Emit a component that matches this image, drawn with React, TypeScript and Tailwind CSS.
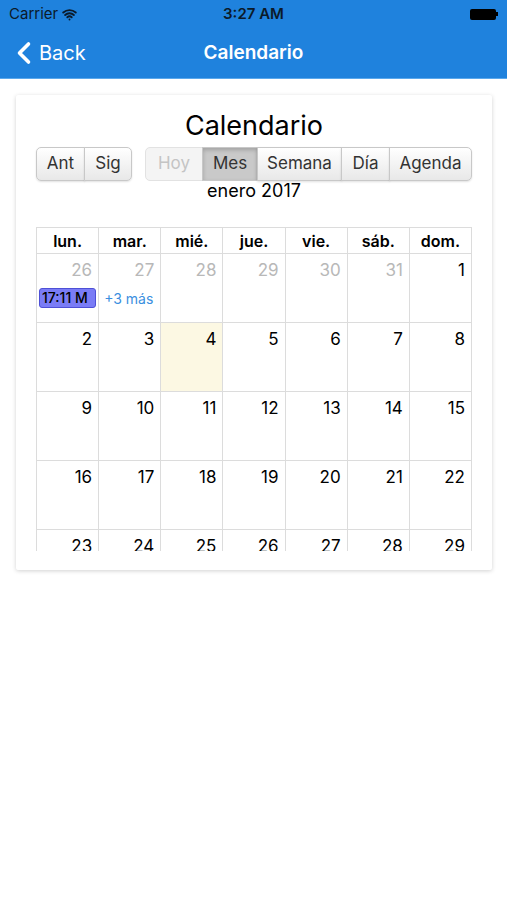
import React from 'react';
import { ChevronLeft, Wifi } from 'lucide-react';

const font = { fontFamily: 'Inter, "Liberation Sans", sans-serif' };

const weekdays = ['lun.', 'mar.', 'mié.', 'jue.', 'vie.', 'sáb.', 'dom.'];

// enero 2017, weeks starting on Monday
const weeks: { d: number; off?: boolean }[][] = [
  [26, 27, 28, 29, 30, 31].map((d) => ({ d, off: true })).concat([{ d: 1 }]),
  [2, 3, 4, 5, 6, 7, 8].map((d) => ({ d })),
  [9, 10, 11, 12, 13, 14, 15].map((d) => ({ d })),
  [16, 17, 18, 19, 20, 21, 22].map((d) => ({ d })),
  [23, 24, 25, 26, 27, 28, 29].map((d) => ({ d })),
  [30, 31, 1, 2, 3, 4, 5].map((d, i) => ({ d, off: i > 1 })),
];

function Btn({ children, active, disabled, first, last, className = '' }: any) {
  return (
    <button
      className={`h-[34px] border border-[#c8c8c8] text-[17px] -ml-px first:ml-0 ${first ? 'rounded-l-[5px]' : ''} ${last ? 'rounded-r-[5px]' : ''} ${
        active
          ? 'bg-[#c9c9c9] text-[#333] shadow-[inset_0_2px_4px_rgba(0,0,0,0.2)]'
          : disabled
          ? 'bg-[#f4f4f4] text-[#c4c4c4] border-[#e2e2e2]'
          : 'bg-gradient-to-b from-white to-[#e8e8e8] text-[#333] shadow-[0_1px_2px_rgba(0,0,0,0.12)]'
      } ${className}`}
    >
      {children}
    </button>
  );
}

export default function App() {
  return (
    <div className="min-h-[900px] bg-white" style={font}>
      {/* Status + nav bar */}
      <div className="bg-[#1f82dd] border-b border-[#5aa8ec]">
        <div className="h-[28px] flex items-center justify-between px-[9px] text-[15px] text-[#0b1a2a]">
          <div className="flex items-center gap-1 w-[100px]">
            <span>Carrier</span>
            <Wifi size={15} strokeWidth={3} />
          </div>
          <span className="font-semibold">3:27 AM</span>
          <div className="w-[100px] flex justify-end">
            <div className="flex items-center">
              <div className="w-[26px] h-[11px] rounded-[2px] bg-black" />
              <div className="w-[2px] h-[4px] bg-black" />
            </div>
          </div>
        </div>
        <div className="h-[50px] relative flex items-center">
          <div className="flex items-center text-white pl-[6px]">
            <ChevronLeft size={36} strokeWidth={2.4} />
            <span className="text-[20px] -ml-[3px]">Back</span>
          </div>
          <div className="absolute inset-0 flex items-center justify-center text-white text-[19px] font-semibold pointer-events-none">
            Calendario
          </div>
        </div>
      </div>

      {/* Card */}
      <div className="ml-[16px] mr-[15px] mt-[16px] bg-white shadow-[0_1px_4px_rgba(0,0,0,0.18)] rounded-[2px] px-[20px] pt-[15px] pb-[19px]">
        <h1 className="text-center text-[27px] leading-[32px] text-black">Calendario</h1>
        <div className="mt-[5px] flex justify-between">
          <div className="flex">
            <Btn first className="w-[49px]">Ant</Btn>
            <Btn last className="w-[48px]">Sig</Btn>
          </div>
          <div className="flex">
            <Btn first disabled className="w-[58px]">Hoy</Btn>
            <Btn active className="w-[56px]">Mes</Btn>
            <Btn className="w-[85px]">Semana</Btn>
            <Btn className="w-[49px]">Día</Btn>
            <Btn last className="w-[83px]">Agenda</Btn>
          </div>
        </div>
        <div className="text-center text-[18px] leading-[20px] text-black">enero 2017</div>

        {/* Month view */}
        <div className="mt-[26px] h-[324px] overflow-hidden border-l border-t border-[#dcdcdc]">
          <div className="grid grid-cols-7">
            {weekdays.map((w) => (
              <div key={w} className="h-[26px] border-r border-b border-[#dcdcdc] flex items-center justify-center font-semibold text-[16px] text-black">
                {w}
              </div>
            ))}
          </div>
          {weeks.map((week, wi) => (
            <div key={wi} className="grid grid-cols-7 h-[69px]">
              {week.map((c, ci) => (
                <div
                  key={ci}
                  className={`border-r border-b border-[#dcdcdc] ${wi === 1 && ci === 2 ? 'bg-[#fcf8e3]' : ''}`}
                >
                  <div className={`text-right pr-[6px] pt-[5px] text-[17px] leading-[22px] ${c.off ? 'text-[#b8b8b8]' : 'text-black'}`}>
                    {c.d}
                  </div>
                  {wi === 0 && ci === 0 && (
                    <div className="mx-[2px] mt-[7px] h-[20px] rounded-[3px] bg-[#7a7cf6] border border-[#4e50d6] text-[14px] leading-[18px] font-medium text-black px-[2px] overflow-hidden whitespace-nowrap">
                      17:11 M
                    </div>
                  )}
                  {wi === 0 && ci === 1 && (
                    <div className="mt-[8px] pl-[5px] text-[14px] leading-[20px] text-[#3b8fe0]">+3 más</div>
                  )}
                </div>
              ))}
            </div>
          ))}
        </div>
      </div>
    </div>
  );
}
